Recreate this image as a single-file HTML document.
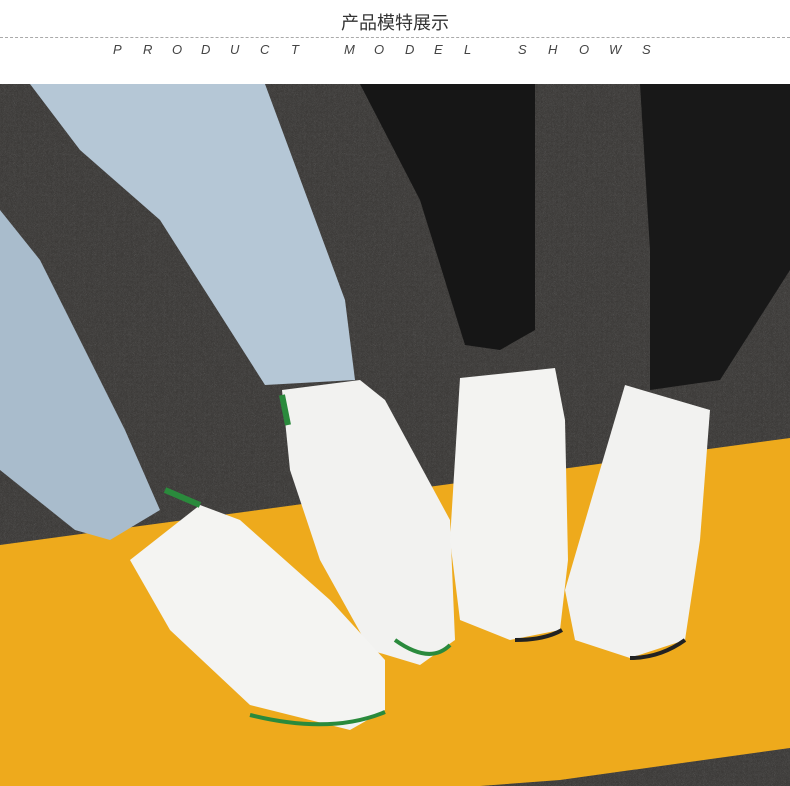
<!DOCTYPE html>
<html><head><meta charset="utf-8"><style>
html,body{margin:0;padding:0;background:#fff;width:790px;height:786px;overflow:hidden}
.t{position:absolute;left:0;width:790px;top:9px;text-align:center;font:18px "Liberation Sans","Noto Sans CJK SC",sans-serif;color:#333}
.d{position:absolute;left:0;top:37px;width:790px;border-top:1px dashed #aaa}
.e span{position:absolute;top:42px;font:italic 13px "Liberation Sans",sans-serif;color:#444}
svg{position:absolute;left:0;top:84px}
</style></head><body>
<div class="t">产品模特展示</div>
<div class="d"></div>
<div class="e">
<span style="left:113px">P</span><span style="left:143px">R</span><span style="left:172px">O</span><span style="left:201px">D</span><span style="left:230px">U</span><span style="left:260px">C</span><span style="left:291px">T</span>
<span style="left:344px">M</span><span style="left:374px">O</span><span style="left:405px">D</span><span style="left:434px">E</span><span style="left:464px">L</span>
<span style="left:518px">S</span><span style="left:548px">H</span><span style="left:579px">O</span><span style="left:609px">W</span><span style="left:642px">S</span>
</div>
<svg width="790" height="702" viewBox="0 84 790 702">
<defs><filter id="n"><feTurbulence baseFrequency="0.9" numOctaves="2"/><feColorMatrix values="0 0 0 0 0.2 0 0 0 0 0.2 0 0 0 0 0.2 0 0 0 0.5 0"/><feComposite in2="SourceGraphic" operator="in"/></filter></defs>
<rect x="0" y="84" width="790" height="702" fill="#3a3836"/>
<rect x="0" y="84" width="790" height="702" fill="#555" filter="url(#n)"/>
<polygon points="0,545 790,438 790,748 560,780 480,786 0,786" fill="#eeaa1c"/>
<polygon points="30,84 265,84 345,300 355,380 265,385 160,220 80,150" fill="#b5c7d6"/>
<polygon points="0,210 40,260 125,430 160,510 110,540 75,530 0,470" fill="#a9bccc"/>
<polygon points="360,84 535,84 535,330 500,350 465,345 420,200" fill="#161616"/>
<polygon points="640,84 790,84 790,270 720,380 650,390 650,250" fill="#181818"/>
<polygon points="282,390 360,380 385,400 450,520 455,640 420,665 370,650 320,560 290,470" fill="#f2f2f0"/>
<polygon points="130,560 200,505 240,520 330,600 385,660 385,710 350,730 250,705 170,630" fill="#f4f4f2"/>
<polygon points="460,378 555,368 565,420 568,560 560,630 510,640 460,620 450,540" fill="#f3f3f1"/>
<polygon points="625,385 710,410 700,540 685,640 630,658 575,640 565,590 600,470" fill="#f2f2f0"/>
<path d="M282,395 L288,425 M165,490 L200,505" stroke="#2a8a3c" stroke-width="6"/>
<path d="M395,640 Q430,665 450,645 M250,715 Q330,735 385,712" stroke="#2a8a3c" stroke-width="4" fill="none"/>
<path d="M515,640 Q545,640 562,630 M630,658 Q660,658 685,640" stroke="#222" stroke-width="4" fill="none"/>
</svg>
</body></html>
